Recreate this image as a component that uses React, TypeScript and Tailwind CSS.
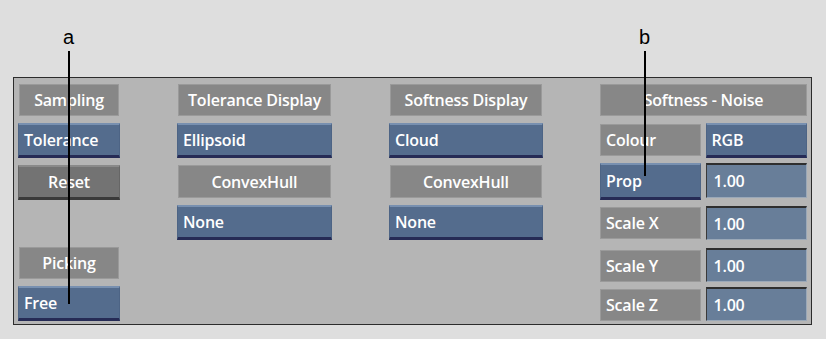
import React from "react";

const FONT = "font-['Open_Sans',_'DejaVu_Sans',_sans-serif]";
const TXT = "text-white text-[16px] font-semibold tracking-[-0.2px]";

function Label({ text, h = "h-[32px]", cls = "" }: { text: string; h?: string; cls?: string }) {
  return (
    <div className={`${h} ${cls} flex items-center justify-center bg-[#878787] border border-[#9a9a9a] ${TXT} ${FONT}`}>
      {text}
    </div>
  );
}

function LeftLabel({ text, cls = "" }: { text: string; cls?: string }) {
  return (
    <div className={`h-[32px] ${cls} flex items-center pl-[5px] bg-[#878787] border border-[#9a9a9a] ${TXT} ${FONT}`}>
      {text}
    </div>
  );
}

function BlueBtn({ text, cls = "" }: { text: string; cls?: string }) {
  return (
    <div
      className={`h-[35px] ${cls} flex items-center pl-[5px] bg-[#546c8d] border-t-2 border-t-[#7890b0] border-b-[3px] border-b-[#262b55] border-x border-x-[#4d6485] ${TXT} ${FONT}`}
    >
      {text}
    </div>
  );
}

function Field({ text, cls = "" }: { text: string; cls?: string }) {
  return (
    <div
      className={`h-[34px] ${cls} flex items-center pl-[7px] bg-[#687e99] border-t-2 border-t-[#2e2e2e] border-l border-l-[#3a3a3a] border-r border-r-[#9aa8b8] border-b border-b-[#9aa8b8] ${TXT} ${FONT}`}
    >
      {text}
    </div>
  );
}

function Pointer({ letter, lineH }: { letter: string; lineH: string }) {
  return (
    <div className="flex flex-col items-center">
      <span className="text-[20px] leading-none text-black font-['Liberation_Sans',_sans-serif]">{letter}</span>
      <div className={`w-[2px] ${lineH} bg-black mt-[4px]`} />
    </div>
  );
}

export default function App() {
  return (
    <div className="relative w-[826px] h-[339px] bg-[#dedede] pt-[77px] pl-[13px]">
      <div className="w-[799px] h-[248px] bg-[#b5b5b5] border border-[#2c2c2c] flex pt-[6px] pl-[4px]">
        {/* col 1 */}
        <div className="w-[102px] flex flex-col">
          <Label text="Sampling" cls="mx-[1px]" />
          <BlueBtn text="Tolerance" cls="mt-[7px]" />
          <div className={`mt-[7px] h-[35px] flex items-center justify-center bg-[#737373] border-t-2 border-t-[#8a8a8a] border-b-[3px] border-b-[#3a3a3a] border-x border-x-[#666] ${TXT} ${FONT}`}>
            Reset
          </div>
          <Label text="Picking" cls="mt-[47px] mx-[1px]" />
          <BlueBtn text="Free" cls="mt-[7px]" />
        </div>
        {/* col 2 */}
        <div className="w-[155px] ml-[57px] flex flex-col">
          <Label text="Tolerance Display" cls="mx-[1px]" />
          <BlueBtn text="Ellipsoid" cls="mt-[7px]" />
          <Label text="ConvexHull" h="h-[33px]" cls="mt-[7px] mx-[1px]" />
          <BlueBtn text="None" cls="mt-[7px]" />
        </div>
        {/* col 3 */}
        <div className="w-[154px] ml-[57px] flex flex-col">
          <Label text="Softness Display" cls="mx-[1px]" />
          <BlueBtn text="Cloud" cls="mt-[7px]" />
          <Label text="ConvexHull" h="h-[33px]" cls="mt-[7px] mx-[1px]" />
          <BlueBtn text="None" cls="mt-[7px]" />
        </div>
        {/* col 4 */}
        <div className="w-[207px] ml-[57px] flex flex-col">
          <Label text="Softness - Noise" />
          <div className="flex gap-[5px] mt-[7px]">
            <LeftLabel text="Colour" cls="w-[101px] mt-[1px]" />
            <BlueBtn text="RGB" cls="w-[102px]" />
          </div>
          <div className="flex gap-[5px] mt-[5px]">
            <BlueBtn text="Prop" cls="w-[101px] h-[37px]" />
            <Field text="1.00" cls="w-[102px] h-[35px]" />
          </div>
          <div className="flex gap-[5px] mt-[6px]">
            <LeftLabel text="Scale X" cls="w-[101px] mt-[1px]" />
            <Field text="1.00" cls="w-[102px]" />
          </div>
          <div className="flex gap-[5px] mt-[8px]">
            <LeftLabel text="Scale Y" cls="w-[101px] mt-[2px]" />
            <Field text="1.00" cls="w-[102px]" />
          </div>
          <div className="flex gap-[5px] mt-[5px]">
            <LeftLabel text="Scale Z" cls="w-[101px] mt-[2px]" />
            <Field text="1.00" cls="w-[102px]" />
          </div>
        </div>
      </div>
      <div className="absolute left-[63px] top-[27px]">
        <Pointer letter="a" lineH="h-[253px]" />
      </div>
      <div className="absolute left-[639px] top-[27px]">
        <Pointer letter="b" lineH="h-[125px]" />
      </div>
    </div>
  );
}
